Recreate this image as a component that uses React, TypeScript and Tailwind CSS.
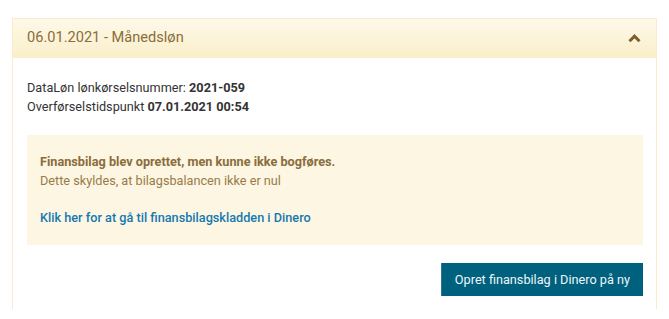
import React from 'react';

const ChevronUp: React.FC = () => (
    <svg width="13" height="9" viewBox="0 0 13 9" className="block">
        <path d="M1.5 7.2 L6.5 2.2 L11.5 7.2" fill="none" stroke="#7d5f30" strokeWidth="3" strokeLinejoin="miter" />
    </svg>
);

export default function App() {
    return (
        <div className="w-[669px] h-[319px] bg-white pt-[18px] px-[12px] font-['Roboto',sans-serif]">
            <div className="flex flex-col border border-b-0 border-[#faebcc] h-[291px]">
                <div className="flex items-center justify-between h-[39px] pl-[14px] pr-[15px] bg-gradient-to-b from-[#fdf9e9] to-[#fbefca] border-b border-[#faebcc]">
                    <span className="text-[14.6px] text-[#8a6d3b]">06.01.2021 - Månedsløn</span>
                    <ChevronUp />
                </div>
                <div className="flex flex-col pl-[14px] pr-[13px] pt-[21px]">
                    <div className="text-[12.7px] leading-[18.5px] text-[#333]">
                        <div>
                            DataLøn lønkørselsnummer: <span className="font-bold">2021-059</span>
                        </div>
                        <div>
                            Overførselstidspunkt <span className="font-bold">07.01.2021 00:54</span>
                        </div>
                    </div>
                    <div className="mt-[19px] bg-[#fcf6e2] px-[13px] pt-[17px] pb-[18px] text-[12.7px] leading-[19px]">
                        <div className="font-bold text-[#8a6d3b]">Finansbilag blev oprettet, men kunne ikke bogføres.</div>
                        <div className="text-[#9a7a4a]">Dette skyldes, at bilagsbalancen ikke er nul</div>
                        <a className="block mt-[18px] font-medium text-[#1479b1]">
                            Klik her for at gå til finansbilagskladden i Dinero
                        </a>
                    </div>
                    <div className="flex justify-end mt-[18px]">
                        <button className="h-[33px] px-[13px] bg-[#00617f] border-l border-[#2a7a93] text-[12.7px] text-[#eef6f9]">
                            Opret finansbilag i Dinero på ny
                        </button>
                    </div>
                </div>
            </div>
        </div>
    );
}
